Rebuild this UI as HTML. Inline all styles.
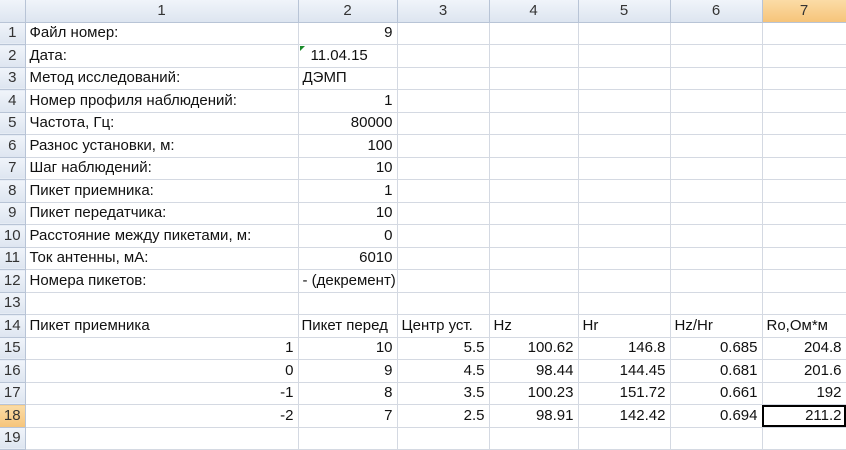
<!DOCTYPE html>
<html><head><meta charset="utf-8"><style>
*{margin:0;padding:0;box-sizing:border-box}
body{width:846px;height:441px;overflow:hidden;background:#fff;font-family:"Liberation Sans",sans-serif;font-size:15px;color:#111}
table{border-collapse:collapse;table-layout:fixed;position:absolute;left:0;top:0;width:846px}
td{border-right:1px solid #d4d9e2;border-bottom:1px solid #d4d9e2;height:22.5px;padding:0 4px;white-space:nowrap;overflow:hidden;line-height:20px}
tr.h td{height:22px;background:linear-gradient(#f0f4fa,#dde5f0);text-align:center;color:#333;border-color:#b8c4d6}
td.rh{background:linear-gradient(#f0f4fa,#dde5f0);text-align:center;color:#333;padding:0;border-color:#b8c4d6}
td.sel{background:linear-gradient(#fbdca6,#f6c47a)!important}
.r{text-align:right}
.act{outline:2px solid #000;outline-offset:-2px}
</style></head><body>
<table>
<colgroup><col style="width:25px"><col style="width:273px"><col style="width:99px"><col style="width:92px"><col style="width:89px"><col style="width:92px"><col style="width:92px"><col style="width:84px"></colgroup>
<tr class="h"><td></td><td>1</td><td>2</td><td>3</td><td>4</td><td>5</td><td>6</td><td class="sel">7</td></tr>
<tr><td class="rh">1</td><td>Файл номер:</td><td class="r">9</td><td></td><td></td><td></td><td></td><td></td></tr>
<tr><td class="rh">2</td><td>Дата:</td><td style="padding-left:12px;position:relative"><span style="position:absolute;left:1px;top:1px;border-top:5px solid #1a8a2a;border-right:5px solid transparent"></span>11.04.15</td><td></td><td></td><td></td><td></td><td></td></tr>
<tr><td class="rh">3</td><td>Метод исследований:</td><td>ДЭМП</td><td></td><td></td><td></td><td></td><td></td></tr>
<tr><td class="rh">4</td><td>Номер профиля наблюдений:</td><td class="r">1</td><td></td><td></td><td></td><td></td><td></td></tr>
<tr><td class="rh">5</td><td>Частота, Гц:</td><td class="r">80000</td><td></td><td></td><td></td><td></td><td></td></tr>
<tr><td class="rh">6</td><td>Разнос установки, м:</td><td class="r">100</td><td></td><td></td><td></td><td></td><td></td></tr>
<tr><td class="rh">7</td><td>Шаг наблюдений:</td><td class="r">10</td><td></td><td></td><td></td><td></td><td></td></tr>
<tr><td class="rh">8</td><td>Пикет приемника:</td><td class="r">1</td><td></td><td></td><td></td><td></td><td></td></tr>
<tr><td class="rh">9</td><td>Пикет передатчика:</td><td class="r">10</td><td></td><td></td><td></td><td></td><td></td></tr>
<tr><td class="rh">10</td><td>Расстояние между пикетами, м:</td><td class="r">0</td><td></td><td></td><td></td><td></td><td></td></tr>
<tr><td class="rh">11</td><td>Ток антенны, мА:</td><td class="r">6010</td><td></td><td></td><td></td><td></td><td></td></tr>
<tr><td class="rh">12</td><td>Номера пикетов:</td><td>- (декремент)</td><td></td><td></td><td></td><td></td><td></td></tr>
<tr><td class="rh">13</td><td></td><td></td><td></td><td></td><td></td><td></td><td></td></tr>
<tr><td class="rh">14</td><td>Пикет приемника</td><td style="padding-left:3px">Пикет перед</td><td>Центр уст.</td><td>Hz</td><td>Hr</td><td>Hz/Hr</td><td>Ro,Ом*м</td></tr>
<tr><td class="rh">15</td><td class="r">1</td><td class="r">10</td><td class="r">5.5</td><td class="r">100.62</td><td class="r">146.8</td><td class="r">0.685</td><td class="r">204.8</td></tr>
<tr><td class="rh">16</td><td class="r">0</td><td class="r">9</td><td class="r">4.5</td><td class="r">98.44</td><td class="r">144.45</td><td class="r">0.681</td><td class="r">201.6</td></tr>
<tr><td class="rh">17</td><td class="r">-1</td><td class="r">8</td><td class="r">3.5</td><td class="r">100.23</td><td class="r">151.72</td><td class="r">0.661</td><td class="r">192</td></tr>
<tr><td class="rh sel">18</td><td class="r">-2</td><td class="r">7</td><td class="r">2.5</td><td class="r">98.91</td><td class="r">142.42</td><td class="r">0.694</td><td class="r act">211.2</td></tr>
<tr><td class="rh">19</td><td></td><td></td><td></td><td></td><td></td><td></td><td></td></tr>
</table>
</body></html>
